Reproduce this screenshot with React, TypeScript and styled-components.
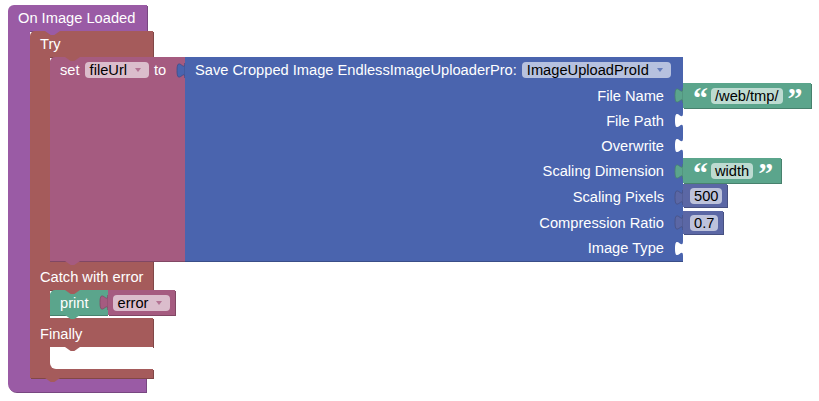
import React from "react";
import styled, { createGlobalStyle, css } from "styled-components";

const colors = {
  event: "#9a5ba5",
  control: "#a55b5b",
  variable: "#a55b80",
  uploader: "#4a64ae",
  text: "#5ba58c",
  math: "#5b67a5",
};

const darken = (hex: string, amount = 0.78) => {
  const n = parseInt(hex.slice(1), 16);
  const r = Math.round(((n >> 16) & 255) * amount);
  const g = Math.round(((n >> 8) & 255) * amount);
  const b = Math.round((n & 255) * amount);
  return `rgb(${r}, ${g}, ${b})`;
};

const GlobalStyle = createGlobalStyle`
  html, body {
    margin: 0;
    background: #fff;
  }
  body {
    font-family: "Liberation Sans", Arial, sans-serif;
    font-size: 11pt;
    color: #fff;
  }
`;

const Workspace = styled.div`
  height: 401px;
  box-sizing: border-box;
  padding: 5px 0 0 8px;
  overflow: hidden;
`;

// the little trapezoid that joins two statement blocks
const tabShape = css`
  content: "";
  position: absolute;
  left: 15px;
  width: 15px;
  height: 4px;
  z-index: 1;
  clip-path: polygon(0 0, 100% 0, 62% 100%, 38% 100%);
`;

const Stack = styled.div<{ $notch?: string; $tab?: string }>`
  position: relative;
  display: flex;
  ${(p) =>
    p.$notch &&
    css`
      &::before {
        ${tabShape};
        top: 0;
        background: ${p.$notch};
      }
    `}
  ${(p) =>
    p.$tab &&
    css`
      &::after {
        ${tabShape};
        bottom: -4px;
        background: ${p.$tab};
      }
    `}
`;

const CBlock = styled(Stack)`
  flex-direction: column;
  align-items: flex-start;
`;

const InlineBlock = styled(Stack)`
  align-items: stretch;
`;

const Bar = styled.div<{
  $color: string;
  $width: number;
  $height: number;
  $round?: string;
  $top?: number;
}>`
  flex: none;
  box-sizing: border-box;
  display: flex;
  align-items: center;
  width: ${(p) => p.$width}px;
  height: ${(p) => p.$height}px;
  padding: ${(p) => p.$top ?? 0}px 0 0 10px;
  background: ${(p) => p.$color};
  border-radius: ${(p) => p.$round ?? "0"};
  box-shadow: 1px 1px 0 ${(p) => darken(p.$color)};
  white-space: nowrap;
`;

const Arm = styled.div<{ $color: string; $width: number }>`
  flex: none;
  align-self: stretch;
  width: ${(p) => p.$width}px;
  background: ${(p) => p.$color};
`;

const Mouth = styled.div<{ $min?: number }>`
  display: flex;
  align-items: flex-start;
  min-height: ${(p) => p.$min ?? 0}px;
`;

const EmptyMouth = styled.div<{ $color: string }>`
  display: flex;
  width: 123px;
  height: 22px;
  background: ${(p) => p.$color};
`;

const Slot = styled.div<{ $color: string }>`
  position: relative;
  flex: 1;
  margin-left: 20px;
  background: #fff;
  border-bottom-left-radius: 6px;
  &::before {
    ${tabShape};
    top: 0;
    background: ${(p) => p.$color};
  }
`;

const SetBody = styled.div`
  width: 135px;
  box-sizing: border-box;
  display: flex;
  align-items: flex-start;
  padding-left: 10px;
  background: ${colors.variable};
  border-top-left-radius: 5px;
  box-shadow: 0 1px 0 ${darken(colors.variable)};
`;

const FieldLine = styled.div`
  flex: 1;
  height: 26px;
  display: flex;
  align-items: center;
  gap: 5px;
  white-space: nowrap;
`;

const Spacer = styled.span`
  flex: 1;
`;

const ProcBlock = styled.div`
  display: flex;
  flex-direction: column;
`;

const ProcHeader = styled.div`
  width: 498px;
  height: 26px;
  box-sizing: border-box;
  display: flex;
  align-items: center;
  gap: 5px;
  padding-left: 10px;
  background: ${colors.uploader};
  white-space: nowrap;
`;

const InputRow = styled.div<{ $h: number }>`
  display: flex;
  align-items: flex-start;
  height: ${(p) => p.$h}px;
`;

const InputLabel = styled.div<{ $last?: boolean }>`
  flex: none;
  width: 498px;
  height: 100%;
  box-sizing: border-box;
  display: flex;
  align-items: center;
  justify-content: flex-end;
  gap: 11px;
  background: ${colors.uploader};
  box-shadow: ${(p) => (p.$last ? `0 1px 0 ${darken(colors.uploader)}` : "none")};
  white-space: nowrap;
`;

const TextBlock = styled.div`
  height: 25px;
  display: flex;
  align-items: center;
  gap: 5px;
  padding: 0 10px;
  background: ${colors.text};
  box-shadow: 1px 1px 0 ${darken(colors.text)};
`;

const Quote = styled.span`
  flex: none;
  align-self: flex-start;
  width: 13px;
  height: 25px;
  overflow: visible;
  font: bold 30px/30px "Liberation Serif", serif;
  color: #fff;
  text-align: center;
`;

const NumberBlock = styled.div<{ $offset?: number }>`
  height: 23px;
  margin-top: ${(p) => p.$offset ?? 0}px;
  display: flex;
  align-items: center;
  padding: 0 5px 0 7px;
  background: ${colors.math};
  box-shadow: 1px 1px 0 ${darken(colors.math)};
`;

const PrintBody = styled.div`
  height: 25px;
  display: flex;
  align-items: center;
  gap: 11px;
  padding-left: 10px;
  background: ${colors.text};
  border-top-left-radius: 5px;
  box-shadow: 0 1px 0 ${darken(colors.text)};
`;

const VarGet = styled.div`
  height: 25px;
  display: flex;
  align-items: center;
  padding: 0 5px;
  background: ${colors.variable};
  box-shadow: 1px 1px 0 ${darken(colors.variable)};
`;

const Field = styled.span<{ $dropdown?: boolean }>`
  flex: none;
  height: 16px;
  box-sizing: border-box;
  display: inline-flex;
  align-items: center;
  gap: 8px;
  padding: ${(p) => (p.$dropdown ? "0 8px 0 5px" : "0 4px")};
  border-radius: 4px;
  background: rgba(255, 255, 255, 0.6);
  color: #000;
  line-height: 16px;
  white-space: nowrap;
`;

const Svg = styled.svg`
  flex: none;
  display: block;
  overflow: visible;
`;

const Socket = ({ fill, filled }: { fill: string; filled?: boolean }) => (
  <Svg width="8" height="15" viewBox="0 0 8 15">
    <path
      d="M8,0 C8,10 0,-8 0,7.5 C0,23 8,5 8,15 Z"
      fill={fill}
      stroke={filled ? darken(fill) : "none"}
      strokeWidth="0.8"
    />
  </Svg>
);

const Dropdown = ({ value, color }: { value: string; color: string }) => (
  <Field $dropdown>
    {value}
    <Svg width="6" height="4" viewBox="0 0 6 4">
      <path d="M0,0 H6 L3,4 Z" fill={color} opacity={0.75} />
    </Svg>
  </Field>
);

const StringBlock = ({ value }: { value: string }) => (
  <TextBlock>
    <Quote>“</Quote>
    <Field>{value}</Field>
    <Quote>”</Quote>
  </TextBlock>
);

type Input = {
  label: string;
  height: number;
  child?: React.ReactNode;
  color?: string;
};

const inputs: Input[] = [
  { label: "File Name", height: 25, child: <StringBlock value="/web/tmp/" />, color: colors.text },
  { label: "File Path", height: 25 },
  { label: "Overwrite", height: 25 },
  { label: "Scaling Dimension", height: 26, child: <StringBlock value="width" />, color: colors.text },
  {
    label: "Scaling Pixels",
    height: 26,
    child: (
      <NumberBlock>
        <Field>500</Field>
      </NumberBlock>
    ),
    color: colors.math,
  },
  {
    label: "Compression Ratio",
    height: 25,
    child: (
      <NumberBlock $offset={1}>
        <Field>0.7</Field>
      </NumberBlock>
    ),
    color: colors.math,
  },
  { label: "Image Type", height: 26 },
];

const SaveCroppedImage = () => (
  <ProcBlock>
    <ProcHeader>
      Save Cropped Image EndlessImageUploaderPro:
      <Dropdown value="ImageUploadProId" color={colors.uploader} />
    </ProcHeader>
    {inputs.map((input, i) => (
      <InputRow key={input.label} $h={input.height}>
        <InputLabel $last={i === inputs.length - 1}>
          {input.label}
          <Socket fill={input.color ?? "#fff"} filled={!!input.color} />
        </InputLabel>
        {input.child}
      </InputRow>
    ))}
  </ProcBlock>
);

export default function App() {
  return (
    <>
      <GlobalStyle />
      <Workspace>
        <CBlock>
          <Bar $color={colors.event} $width={139} $height={26} $round="6px 0 0 0">
            On Image Loaded
          </Bar>
          <Mouth>
            <Arm $color={colors.event} $width={22} />
            <CBlock $notch={colors.event} $tab={colors.control}>
              <Bar $color={colors.control} $width={123} $height={26} $round="5px 0 0 0">
                Try
              </Bar>
              <Mouth>
                <Arm $color={colors.control} $width={20} />
                <InlineBlock $notch={colors.control} $tab={colors.variable}>
                  <SetBody>
                    <FieldLine>
                      set
                      <Dropdown value="fileUrl" color={colors.variable} />
                      to
                      <Spacer />
                      <Socket fill={colors.uploader} filled />
                    </FieldLine>
                  </SetBody>
                  <SaveCroppedImage />
                </InlineBlock>
              </Mouth>
              <Bar $color={colors.control} $width={123} $height={29} $top={3}>
                Catch with error
              </Bar>
              <Mouth $min={28}>
                <Arm $color={colors.control} $width={20} />
                <InlineBlock $notch={colors.control} $tab={colors.text}>
                  <PrintBody>
                    print
                    <Socket fill={colors.variable} filled />
                  </PrintBody>
                  <VarGet>
                    <Dropdown value="error" color={colors.variable} />
                  </VarGet>
                </InlineBlock>
              </Mouth>
              <Bar $color={colors.control} $width={123} $height={29} $top={2}>
                Finally
              </Bar>
              <EmptyMouth $color={colors.control}>
                <Slot $color={colors.control} />
              </EmptyMouth>
              <Bar $color={colors.control} $width={123} $height={9} />
            </CBlock>
          </Mouth>
          <Bar $color={colors.event} $width={138} $height={14} $round="0 0 0 8px" />
        </CBlock>
      </Workspace>
    </>
  );
}
